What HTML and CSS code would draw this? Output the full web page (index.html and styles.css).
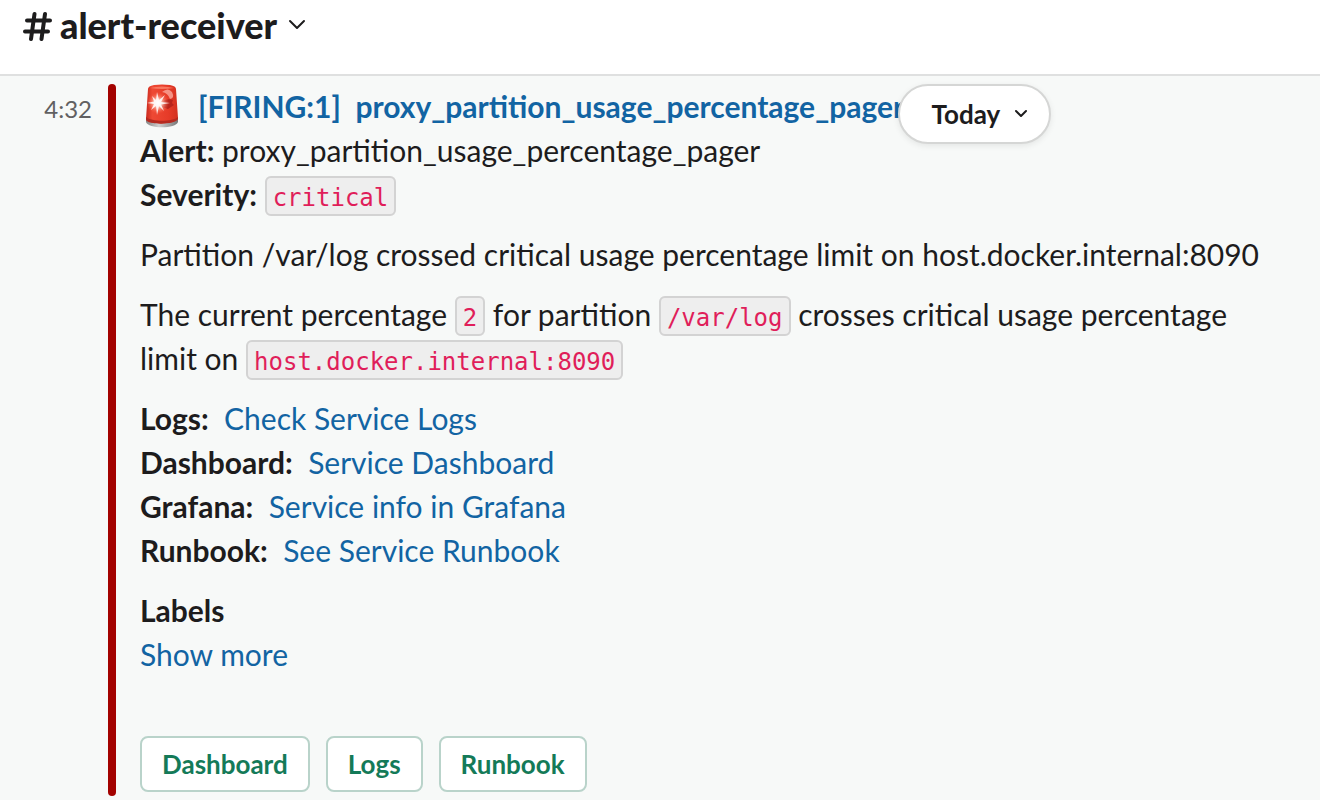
FILE: index.html
```html
<!DOCTYPE html>
<html lang="en">
<head>
<meta charset="utf-8">
<title>alert-receiver</title>
<link rel="stylesheet" href="styles.css">
</head>
<body>
<header class="header">
  <button class="channel" type="button">
    <svg class="hash" viewBox="0 0 30 30" aria-hidden="true"><path d="M5 9.500H28M3 20.500H26M12.500 3L9 28M23 3L19.500 28"/></svg>
    <span>alert-receiver</span>
    <svg class="channel-caret" viewBox="0 0 18 12" aria-hidden="true"><path d="M2 2L9 9L16 2"/></svg>
  </button>
</header>
<main class="message">
  <time class="time">4:32</time>
  <article class="attachment">
    <h1 class="title">
      <svg class="siren" viewBox="0 0 40 44" role="img" aria-label="rotating light">
        <defs>
          <linearGradient id="dome" x1="0" x2="1"><stop offset="0" stop-color="#c92a1e"/><stop offset=".2" stop-color="#ee4934"/><stop offset=".7" stop-color="#e63b28"/><stop offset="1" stop-color="#d2301f"/></linearGradient>
          <linearGradient id="base" x1="0" x2="1"><stop offset="0" stop-color="#858585"/><stop offset=".4" stop-color="#d0d0d0"/><stop offset="1" stop-color="#777"/></linearGradient>
          <radialGradient id="glow"><stop offset="0" stop-color="#fff"/><stop offset=".35" stop-color="#ffd0c2" stop-opacity=".85"/><stop offset="1" stop-color="#ff5a40" stop-opacity="0"/></radialGradient>
        </defs>
        <path d="M4 35V38C6 45 34 45 36 38V35Z" fill="url(#base)"/>
        <path d="M6 5Q6 2 12 1Q20 0 28 1Q34 2 34 5L36 34C34 41 6 41 4 35Z" fill="url(#dome)"/>
        <path d="M4 33C10 38 30 38 36 33V35C34 41 6 41 4 36Z" fill="#b52a20"/>
        <path d="M8 4Q20 1 32 4Q20 6 8 4Z" fill="#f87860"/>
        <path d="M19 18Q25 14 31 16L30 19L32 21L26 25L20 23Z" fill="#b8241c"/>
        <path d="M20 8Q26 3 30 8Q33 14 28 15Q26 9 20 8Z" fill="#f59284"/>
        <circle cx="16" cy="19" r="11" fill="url(#glow)"/>
        <path d="M15 8L17 16L23 11L19 18L28 19L19 20.500L22 27L17 22L15 31L14 22L9 26L12 20L5 19L12 17.500L10 12L14 16Z" fill="#fff" fill-opacity=".85"/>
      </svg>
      <a href="#alert">[FIRING:1]&nbsp; proxy_partition_usage_percentage_pager</a>
    </h1>
    <p><b>Alert:</b> proxy_partition_usage_percentage_pager<br><b>Severity:</b> <code>critical</code></p>
    <p>Partition /var/log crossed critical usage percentage limit on host.docker.internal:8090</p>
    <p>The current percentage <code>2</code> for partition <code>/var/log</code> crosses critical usage percentage limit on <code>host.docker.internal:8090</code></p>
    <p><b>Logs:</b>&nbsp; <a href="#logs">Check Service Logs</a><br><b>Dashboard:</b>&nbsp; <a href="#dashboard">Service Dashboard</a><br><b>Grafana:</b>&nbsp; <a href="#grafana">Service info in Grafana</a><br><b>Runbook:</b>&nbsp; <a href="#runbook">See Service Runbook</a></p>
    <p><b>Labels</b><br><a href="#more">Show more</a></p>
    <div class="actions">
      <button class="action" type="button">Dashboard</button>
      <button class="action" type="button">Logs</button>
      <button class="action" type="button">Runbook</button>
    </div>
  </article>
  <button class="day" type="button">Today
    <svg class="day-caret" viewBox="0 0 14 10" aria-hidden="true"><path d="M2 2L7 7L12 2"/></svg>
  </button>
</main>
</body>
</html>
```

FILE: styles.css
```css
* {
  box-sizing: border-box;
}

body {
  margin: 0;
  min-height: 100vh;
  display: flex;
  flex-direction: column;
  background: #f7f9f8;
  color: #1d1c1d;
  font: 30px/44px Lato, sans-serif;
}

button {
  font-family: inherit;
  color: inherit;
  cursor: pointer;
}

svg {
  fill: none;
  stroke: currentColor;
  stroke-linecap: round;
  stroke-linejoin: round;
}

a {
  color: #1264a3;
  text-decoration: none;
}

b {
  font-weight: 700;
}

.header {
  padding: 3px 22px 27px;
  background: #fff;
  border-bottom: 2px solid #dfe0e0;
}

.channel {
  display: flex;
  align-items: center;
  padding: 0;
  border: 0;
  background: none;
  font-size: 36px;
  font-weight: 900;
  line-height: 44px;
}

.hash {
  width: 30px;
  height: 30px;
  margin: 2px 8px 0 0;
  stroke-width: 4;
}

.channel-caret {
  width: 18px;
  height: 12px;
  margin-left: 11px;
  stroke-width: 2;
}

.message {
  position: relative;
  display: flex;
  padding: 8px 40px 4px 0;
}

.time {
  flex: 0 0 108px;
  padding: 3px 16px 0 0;
  color: #616061;
  font-size: 24px;
  text-align: right;
}

.attachment {
  position: relative;
  flex: 1;
  min-width: 0;
  padding: 0 0 4px 32px;
}

.attachment::before {
  content: "";
  position: absolute;
  inset: 0 auto 0 0;
  width: 8px;
  border-radius: 4px;
  background: #a30200;
}

.title {
  display: flex;
  align-items: center;
  gap: 14px;
  margin: 0;
  font-size: 30px;
  font-weight: 700;
}

.siren {
  width: 44px;
  height: 44px;
  stroke: none;
}

.attachment p {
  margin: 0 0 16px;
}

code {
  padding: 6px 6px 2px;
  border: 2px solid #d3d3d3;
  border-radius: 6px;
  background: #eeeeee;
  color: #e01e5a;
  font: 24px/36px "DejaVu Sans Mono", monospace;
}

.actions {
  display: flex;
  flex-wrap: wrap;
  gap: 16px;
  padding-top: 44px;
}

.action {
  height: 56px;
  padding: 0 20px;
  border: 2px solid #b9d3ca;
  border-radius: 8px;
  background: #fff;
  color: #147a58;
  font-size: 26px;
  font-weight: 700;
}

.day {
  position: absolute;
  top: 8px;
  left: 68%;
  display: flex;
  align-items: center;
  gap: 14px;
  height: 60px;
  padding: 0 21px 0 32px;
  border: 2px solid #d5d6d5;
  border-radius: 30px;
  background: #fff;
  box-shadow: 0 2px 6px #00000014;
  font-size: 26px;
  font-weight: 700;
}

.day-caret {
  width: 14px;
  height: 10px;
  stroke-width: 2;
}
```
